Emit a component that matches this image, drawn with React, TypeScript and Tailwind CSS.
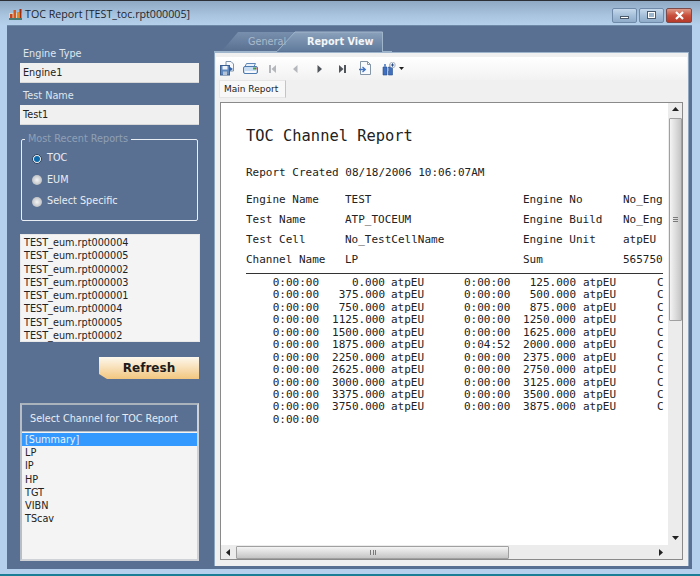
import React from "react";

const FILES = [
  "TEST_eum.rpt000004",
  "TEST_eum.rpt000005",
  "TEST_eum.rpt000002",
  "TEST_eum.rpt000003",
  "TEST_eum.rpt000001",
  "TEST_eum.rpt00004",
  "TEST_eum.rpt00005",
  "TEST_eum.rpt00002",
];

const CHANNELS = ["LP", "IP", "HP", "TGT", "VIBN", "TScav"];

const HEADER_ROWS = [
  ["Engine Name", "TEST", "Engine No", "No_Eng"],
  ["Test Name", "ATP_TOCEUM", "Engine Build", "No_Eng"],
  ["Test Cell", "No_TestCellName", "Engine Unit", "atpEU"],
  ["Channel Name", "LP", "Sum", "565750"],
];

const DATA_ROWS = [
  ["0:00:00", "0.000", "0:00:00", "125.000"],
  ["0:00:00", "375.000", "0:00:00", "500.000"],
  ["0:00:00", "750.000", "0:00:00", "875.000"],
  ["0:00:00", "1125.000", "0:00:00", "1250.000"],
  ["0:00:00", "1500.000", "0:00:00", "1625.000"],
  ["0:00:00", "1875.000", "0:04:52", "2000.000"],
  ["0:00:00", "2250.000", "0:00:00", "2375.000"],
  ["0:00:00", "2625.000", "0:00:00", "2750.000"],
  ["0:00:00", "3000.000", "0:00:00", "3125.000"],
  ["0:00:00", "3375.000", "0:00:00", "3500.000"],
  ["0:00:00", "3750.000", "0:00:00", "3875.000"],
];

const AppIcon = () => (
  <svg width="13" height="12" viewBox="0 0 13 12">
    <rect x="0" y="5" width="13" height="5" fill="#d9d2c0" />
    <rect x="1" y="6" width="2.500" height="4" fill="#c8431a" />
    <rect x="4.500" y="2" width="2.500" height="8" fill="#d8581c" />
    <rect x="8" y="4" width="2" height="6" fill="#e08a2a" />
    <rect x="10.500" y="1" width="2" height="9" fill="#a02c10" />
    <rect x="0" y="10" width="13" height="2" fill="#4a7a70" />
  </svg>
);

const CaptionButton = ({ kind }: { kind: "min" | "max" | "close" }) => {
  if (kind === "close") {
    return (
      <div className="w-[26px] h-[15px] rounded-[2px] border border-[#7c4a48] bg-[linear-gradient(#e09a88,#c8503c_50%,#b83a2a)] flex items-center justify-center">
        <svg width="11" height="9" viewBox="0 0 11 9">
          <path d="M2 1 L9 8 M9 1 L2 8" stroke="#ffffff" strokeWidth="2.2" />
        </svg>
      </div>
    );
  }
  return (
    <div className="w-[25px] h-[15px] rounded-[2px] border border-[#6f8aa8] bg-[linear-gradient(#c6d9ec,#a6c0da_50%,#8fabc8)] flex items-center justify-center">
      {kind === "min" ? (
        <div className="w-[9px] h-[3px] mt-[4px] bg-white border border-[#4a5a6c]" />
      ) : (
        <div className="w-[9px] h-[8px] bg-white border border-[#4a5a6c] p-[1px]">
          <div className="w-full h-full bg-[#9db6d0]" />
        </div>
      )}
    </div>
  );
};

const Radio = ({ label, checked }: { label: string; checked?: boolean }) => (
  <div className="flex items-center h-[21.5px] pl-[10px]">
    {checked ? (
      <div className="w-[10px] h-[10px] rounded-full bg-[#f2f2f2] border border-[#2a3f5c] flex items-center justify-center">
        <div className="w-[6px] h-[6px] rounded-full bg-[#0a6aac]" />
      </div>
    ) : (
      <div className="w-[10px] h-[10px] rounded-full bg-[radial-gradient(#f4f4f4,#a9adb2)]" />
    )}
    <span className="ml-[5px] text-[#e8edf3]">{label}</span>
  </div>
);

const StepIcon = ({ dir, color }: { dir: "first" | "prev" | "next" | "last"; color: string }) => (
  <svg width="9" height="10" viewBox="0 0 9 10">
    {dir === "first" && <path d="M1 1h2v8H1z M8 1v8L3.500 5z" fill={color} />}
    {dir === "prev" && <path d="M6.500 1v8L2 5z" fill={color} />}
    {dir === "next" && <path d="M2.500 1v8L7 5z" fill={color} />}
    {dir === "last" && <path d="M6 1h2v8H6z M1 1v8l4.500-4z" fill={color} />}
  </svg>
);

const Toolbar = () => (
  <div className="h-[23px] shrink-0 flex items-center pl-[4px] bg-[linear-gradient(#ffffff,#f2f2f2)]">
    <svg width="14" height="15" viewBox="0 0 14 15">
      <path d="M6 .5h5l2.500 2.500v7h-7.500z" fill="#f6f8fb" stroke="#7d93aa" />
      <rect x="0.500" y="4.500" width="9" height="9.500" fill="#5f88bf" stroke="#3a5f90" />
      <rect x="2.500" y="5" width="5" height="3.500" fill="#eef2f7" />
      <rect x="3" y="10.500" width="4" height="3.500" fill="#b4c3d5" />
      <path d="M10 6l3 2-3 2z" fill="#2f62a8" />
    </svg>
    <svg className="ml-[9px]" width="15" height="13" viewBox="0 0 15 13">
      <path d="M3.500 1.500h9l-1.500 3h-9z" fill="#e8f0f9" stroke="#5f88b8" />
      <rect x="0.500" y="4.500" width="14" height="7" rx="1.500" fill="#c8dcf2" stroke="#4f7cb0" />
      <rect x="2" y="9" width="11" height="2" fill="#f6f8fb" />
      <rect x="10" y="5.500" width="2" height="2" fill="#3fa648" />
      <rect x="12" y="5.500" width="1.500" height="2" fill="#d8433a" />
    </svg>
    <div className="ml-[10px] w-[9px]"><StepIcon dir="first" color="#b4b8bc" /></div>
    <div className="ml-[14px] w-[9px]"><StepIcon dir="prev" color="#b4b8bc" /></div>
    <div className="ml-[15px] w-[9px]"><StepIcon dir="next" color="#50555c" /></div>
    <div className="ml-[14px] w-[9px]"><StepIcon dir="last" color="#50555c" /></div>
    <svg className="ml-[12px]" width="13" height="15" viewBox="0 0 13 15">
      <path d="M1.500 .5h7l3 3v10h-10z" fill="#f8fafc" stroke="#8496a8" />
      <path d="M8.500 .5v3h3" fill="none" stroke="#8496a8" />
      <path d="M0 8.500h6M3.500 6l2.800 2.500L3.500 11" fill="none" stroke="#3f73c4" strokeWidth="1.300" />
    </svg>
    <svg className="ml-[10px]" width="14" height="14" viewBox="0 0 14 14">
      <path d="M1 5h4v8H1z M6.500 5h4v8h-4z" fill="#3f6fc0" stroke="#2a4f8c" strokeWidth=".6" />
      <path d="M2 2h2v3H2z M7.500 2h2v3h-2z" fill="#6f93cc" />
      <rect x="5" y="6" width="1.500" height="3" fill="#a9bcdc" />
      <circle cx="10.500" cy="3" r="2.800" fill="#f4f6f9" stroke="#8692a4" strokeWidth=".6" />
      <path d="M8.800 3h3.400M10.500 1.300v3.400" stroke="#1d3f7c" strokeWidth=".9" />
    </svg>
    <svg className="ml-[3px]" width="5" height="3" viewBox="0 0 5 3">
      <path d="M0 0h5L2.500 3z" fill="#202020" />
    </svg>
  </div>
);

const Report = () => (
  <div className="flex-1 min-w-0 min-h-0 overflow-hidden bg-white pl-[25px] font-['DejaVu_Sans_Mono',monospace] text-[11px] leading-[12.45px] text-[#222]">
    <div className="w-[417px] overflow-hidden whitespace-nowrap">
      <div className="pt-[23px] text-[15.4px] leading-[20px]">TOC Channel Report</div>
      <div className="mt-[20px] h-[14px] leading-[14px]">Report Created 08/18/2006 10:06:07AM</div>
      <div className="mt-[10px]">
        {HEADER_ROWS.map((row) => (
          <div key={row[0]} className="grid grid-cols-[99px_178px_100px_40px] h-[20px] items-center">
            {row.map((cell, i) => (
              <span key={i} className="overflow-hidden">{cell}</span>
            ))}
          </div>
        ))}
      </div>
      <div className="mt-[3px] h-px bg-[#333]" />
      <div className="mt-[3px]">
        {DATA_ROWS.map((row, i) => (
          <div key={i} className="grid grid-cols-[73px_66px_6px_73px_46px_66px_7px_73px_12px] h-[12.45px]">
            <span className="text-right">{row[0]}</span>
            <span className="text-right">{row[1]}</span>
            <span />
            <span>atpEU</span>
            <span className="text-right">{row[2]}</span>
            <span className="text-right">{row[3]}</span>
            <span />
            <span>atpEU</span>
            <span className="pl-px">C</span>
          </div>
        ))}
        <div className="grid grid-cols-[73px] h-[12.45px]">
          <span className="text-right">0:00:00</span>
        </div>
      </div>
    </div>
  </div>
);

export default function App() {
  return (
    <div className="w-[700px] h-[576px] overflow-hidden flex flex-col font-['DejaVu_Sans',sans-serif] text-[9.7px] border-t border-[#2c3036] border-b-2 border-b-[#1a7f96] bg-[#b4d0ec]">
      {/* title bar */}
      <div className="h-[24px] flex items-center shrink-0 pl-[9px] pr-[8px] bg-[linear-gradient(#8fa9c4,#a9c4de_60%,#b5d0ea)]">
        <div className="mt-[3px] flex items-center">
          <AppIcon />
          <span className="ml-[3px] text-[10.7px] text-[#1c2630] font-['Open_Sans',sans-serif]">
            TOC Report [TEST_toc.rpt000005]
          </span>
        </div>
        <div className="ml-auto flex gap-[2px] mt-[4px]">
          <CaptionButton kind="min" />
          <CaptionButton kind="max" />
          <CaptionButton kind="close" />
        </div>
      </div>

      {/* client area */}
      <div className="flex-1 min-h-0 ml-[7px] mr-[8px] mb-[5px] flex bg-[#5a7092] border-t border-[#6e88a8]">
        {/* left column */}
        <div className="w-[207px] shrink-0 pl-[13px] pr-[7px] pt-[21px] flex flex-col">
          <div className="text-[#dfe6ee] pl-[3px] h-[16px] leading-[14px]">Engine Type</div>
          <div className="h-[20px] w-[179px] bg-[#f0f0f0] flex items-center pl-[3px] pt-[2px] text-[#222] border-b border-[#d8d8d8]">Engine1</div>
          <div className="text-[#dfe6ee] pl-[3px] mt-[6px] h-[16px] leading-[14px]">Test Name</div>
          <div className="h-[20px] w-[179px] bg-[#f0f0f0] flex items-center pl-[3px] pt-[2px] text-[#222] border-b border-[#d8d8d8]">Test1</div>

          <div className="relative mt-[14px] w-[177px] ml-[1px] h-[82px] border border-[#e8eef4] rounded-[2px] pt-[8px]">
            <span className="absolute -top-[8px] left-[3px] px-[3px] bg-[#5a7092] text-[#8fa0b6]">Most Recent Reports</span>
            <Radio label="TOC" checked />
            <Radio label="EUM" />
            <Radio label="Select Specific" />
          </div>

          <div className="mt-[13px] h-[108px] w-[180px] bg-[#f4f4f4] border border-[#e8e8e8] pl-[3px] pt-[1px] text-[#222] leading-[13.25px]">
            {FILES.map((f) => (
              <div key={f}>{f}</div>
            ))}
          </div>

          <div className="mt-[15px] ml-[79px] h-[22px] w-[100px] [clip-path:polygon(0_0,100%_0,100%_100%,8px_100%,0_17px)] bg-[linear-gradient(#fdf8ee,#f3c67f)] flex items-center justify-center font-bold text-[12px] text-[#1c1c1c]">
            Refresh
          </div>

          <div className="mt-[24px] h-[158px] w-[179px] border-2 border-[#cfd3d8] border-t-[#aab2bc] border-l-[#b8bec6] flex flex-col">
            <div className="h-[27px] shrink-0 flex items-center pl-[8px] pt-[2px] text-[#e8edf3] border-b border-[#b8bec6]">
              Select Channel for TOC Report
            </div>
            <div className="flex-1 bg-[#f4f4f4] pt-px text-[#222]">
              <div className="h-[13px] leading-[13px] bg-[#3399ff] text-[#e8f2ff] pl-[3px]">[Summary]</div>
              {CHANNELS.map((c) => (
                <div key={c} className="h-[13.3px] leading-[13.3px] pl-[3px]">{c}</div>
              ))}
            </div>
          </div>
        </div>

        {/* right column */}
        <div className="flex-1 min-w-0 flex flex-col">
          <div className="relative h-[26px] shrink-0">
            <svg className="absolute left-0 top-0" width="180" height="26" viewBox="0 0 180 26">
              <defs>
                <linearGradient id="off" x1="0" y1="0" x2="0" y2="1">
                  <stop offset="0" stopColor="#7890ad" />
                  <stop offset="1" stopColor="#5a7092" />
                </linearGradient>
                <linearGradient id="on" x1="0" y1="0" x2="0" y2="1">
                  <stop offset="0" stopColor="#8ba1bb" />
                  <stop offset="1" stopColor="#5f7a9c" />
                </linearGradient>
              </defs>
              <path d="M8 25 L24 6 H81 L63 25 Z" fill="url(#off)" />
              <path d="M63 25.500 L81 6 H168.500 V25.500" fill="url(#on)" stroke="#9fb5cc" />
              <path d="M0 25.500 H63" stroke="#9fb5cc" />
              <path d="M168 25.500 H178" stroke="#9fb5cc" />
            </svg>
            <span className="absolute left-[34px] top-[9px] text-[#a9bacd]">General</span>
            <span className="absolute left-[93px] top-[9px] font-bold text-[#f2f5f8]">Report View</span>
          </div>

          <div className="relative flex-1 min-h-0 mb-[3px] mr-[3px] border-t border-[#9fb5cc] border-l border-r border-l-[#8fa6c0] border-r-[#8fa6c0] pt-[4px] px-[1px] pb-[6px] flex flex-col bg-[#f0f0f0]">
            <Toolbar />
            <div className="h-[18px] shrink-0 pl-[3px] mb-[4px] flex">
              <div className="h-full w-[67px] pl-[4px] pt-[2px] flex items-center border border-[#e6e6e6] border-r-[#c4c4c4] text-[9px] text-[#222] bg-[#f8f8f8]">Main Report</div>
            </div>
            <div className="flex-1 min-h-0 ml-[4px] mr-[4px] border border-[#8a8a8a] flex flex-col bg-white">
              <div className="flex-1 min-h-0 flex">
                <Report />
                <div className="w-[14px] shrink-0 bg-[#ececec] flex flex-col items-center">
                  <svg className="mt-[4px]" width="7" height="4" viewBox="0 0 7 4"><path d="M0 4h7L3.500 0z" fill="#222" /></svg>
                  <div className="mt-[7px] w-[13px] h-[203px] rounded-[1px] border border-[#a0a0a0] bg-[linear-gradient(90deg,#f4f4f4,#d8d8d8_60%,#c4c4c4)] flex items-center justify-center">
                    <div className="w-[5px] h-[5px] border-y border-[#7a7a7a] bg-[linear-gradient(transparent_1px,#7a7a7a_1px,#7a7a7a_2px,transparent_2px)]" />
                  </div>
                  <svg className="mt-auto mb-[5px]" width="7" height="4" viewBox="0 0 7 4"><path d="M0 0h7L3.500 4z" fill="#222" /></svg>
                </div>
              </div>
              <div className="h-[14px] shrink-0 bg-[#ececec] flex items-center">
                <svg className="ml-[5px]" width="4" height="7" viewBox="0 0 4 7"><path d="M4 0v7L0 3.500z" fill="#222" /></svg>
                <div className="ml-[6px] w-[273px] h-[13px] rounded-[1px] border border-[#a0a0a0] bg-[linear-gradient(#f4f4f4,#d8d8d8_60%,#c4c4c4)] flex items-center justify-center">
                  <div className="w-[6px] h-[5px] border-x border-[#7a7a7a] bg-[linear-gradient(90deg,transparent_2px,#7a7a7a_2px,#7a7a7a_3px,transparent_3px)]" />
                </div>
                <svg className="ml-auto mr-[19px]" width="4" height="7" viewBox="0 0 4 7"><path d="M0 0v7l4-3.500z" fill="#222" /></svg>
              </div>
            </div>
          </div>
        </div>
      </div>
    </div>
  );
}
